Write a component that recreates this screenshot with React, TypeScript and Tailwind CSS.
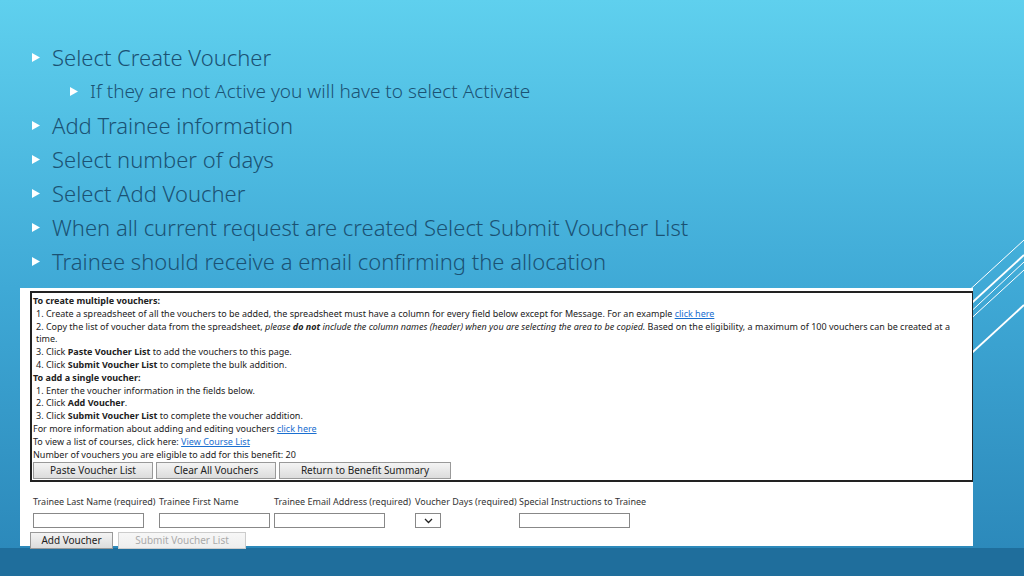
export default function App() {
  const bullets: [string, boolean][] = [
    ['Select Create Voucher', false],
    ['If they are not Active you will have to select Activate', true],
    ['Add Trainee information', false],
    ['Select number of days', false],
    ['Select Add Voucher', false],
    ['When all current request are created Select Submit Voucher List', false],
    ['Trainee should receive a email confirming the allocation', false],
  ]
  const btn = 'h-[17px] border border-[#999] bg-gradient-to-b from-[#f4f4f4] to-[#dcdcdc] text-[10px] text-[#222] flex items-center justify-center font-["Liberation_Sans",sans-serif]'
  return (
    <div className="relative w-[1024px] h-[576px] overflow-hidden bg-gradient-to-b from-[#5fd0ee] via-[#3fa9d6] to-[#2a86b8] font-['Open_Sans',sans-serif]">
      <svg className="absolute right-0 top-[200px]" width="60" height="200" viewBox="0 0 60 200">
        <g stroke="white" fill="none">
          <line x1="0" y1="95" x2="60" y2="40" strokeWidth="1" />
          <line x1="0" y1="110" x2="60" y2="55" strokeWidth="2" />
          <line x1="0" y1="118" x2="60" y2="62" strokeWidth="1" />
          <line x1="0" y1="125" x2="60" y2="70" strokeWidth="1" />
          <line x1="0" y1="160" x2="60" y2="105" strokeWidth="2" />
        </g>
      </svg>
      <div className="absolute left-0 right-0 bottom-0 h-[28px] bg-[#1f6e9c]" />
      <div className="relative pt-[43px] pl-[32px] flex flex-col gap-[5.5px] text-[#1b5274] font-light">
        {bullets.map(([t, sub], i) => (
          <div key={i} className={`flex items-center h-[28.5px] ${sub ? 'pl-[38px] text-[19px]' : 'text-[22px]'}`}>
            <svg className="mr-[12px] shrink-0" width="8" height="9" viewBox="0 0 8 9"><path d="M0 0L8 4.5L0 9Z" fill="white" /></svg>
            <span>{t}</span>
          </div>
        ))}
      </div>
      <div className="absolute left-[20px] top-[288px] w-[953px] h-[258px] bg-white font-['DejaVu_Sans','Verdana',sans-serif] text-[9px] text-[#222] leading-[12.8px]">
        <div className="ml-[10px] mt-[3px] border-2 border-[#222] border-r-[1px] px-[1px] pt-[2px] pb-[1px]">
          <div className="font-bold">To create multiple vouchers:</div>
          <div className="pl-[3px]">1. Create a spreadsheet of all the vouchers to be added, the spreadsheet must have a column for every field below except for Message. For an example <span className="text-[#1a6fd0] underline">click here</span></div>
          <div className="pl-[3px] pr-[4px]">2. Copy the list of voucher data from the spreadsheet, <i>please <b>do not</b> include the column names (header) when you are selecting the area to be copied.</i> Based on the eligibility, a maximum of 100 vouchers can be created at a time.</div>
          <div className="pl-[3px]">3. Click <b>Paste Voucher List</b> to add the vouchers to this page.</div>
          <div className="pl-[3px]">4. Click <b>Submit Voucher List</b> to complete the bulk addition.</div>
          <div className="font-bold">To add a single voucher:</div>
          <div className="pl-[3px]">1. Enter the voucher information in the fields below.</div>
          <div className="pl-[3px]">2. Click <b>Add Voucher</b>.</div>
          <div className="pl-[3px]">3. Click <b>Submit Voucher List</b> to complete the voucher addition.</div>
          <div>For more information about adding and editing vouchers <span className="text-[#1a6fd0] underline">click here</span></div>
          <div>To view a list of courses, click here: <span className="text-[#1a6fd0] underline">View Course List</span></div>
          <div>Number of vouchers you are eligible to add for this benefit: 20</div>
          <div className="flex gap-[3px] mt-[1px]">
            <div className={`${btn} w-[120px]`}>Paste Voucher List</div>
            <div className={`${btn} w-[120px]`}>Clear All Vouchers</div>
            <div className={`${btn} w-[172px]`}>Return to Benefit Summary</div>
          </div>
        </div>
        <div className="flex mt-[14px] ml-[13px] text-[#333]">
          {[
            ['Trainee Last Name (required)', 'w-[126px]', 'w-[111px]'],
            ['Trainee First Name', 'w-[115px]', 'w-[111px]'],
            ['Trainee Email Address (required)', 'w-[141px]', 'w-[111px]'],
            ['Voucher Days (required)', 'w-[104px]', 'sel'],
            ['Special Instructions to Trainee', 'w-[140px]', 'w-[111px]'],
          ].map(([l, w, iw], i) => (
            <div key={i} className={`${w} flex flex-col gap-[4px]`}>
              <div className="whitespace-nowrap">{l}</div>
              {iw === 'sel' ? (
                <div className="w-[26px] h-[15px] border border-[#888] flex items-center justify-center">
                  <svg width="9" height="6" viewBox="0 0 9 6"><path d="M1 1l3.5 3.5L8 1" stroke="#222" strokeWidth="1.3" fill="none" /></svg>
                </div>
              ) : (
                <div className={`${iw} h-[15px] border border-[#888]`} />
              )}
            </div>
          ))}
        </div>
        <div className="flex gap-[5px] ml-[10px] mt-[4px]">
          <div className={`${btn} w-[83px]`}>Add Voucher</div>
          <div className={`${btn} w-[128px] text-[#aaa] border-[#ccc] from-[#f7f7f7] to-[#eee]`}>Submit Voucher List</div>
        </div>
      </div>
    </div>
  )
}
